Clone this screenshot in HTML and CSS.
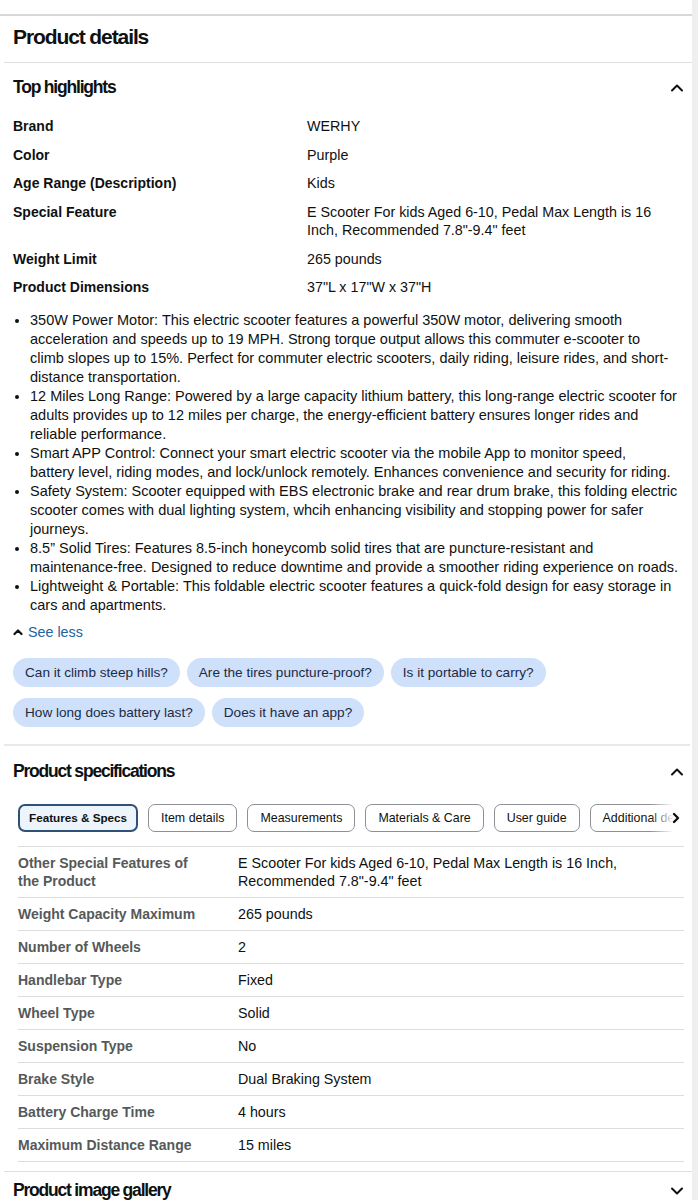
FILE: index.html
```html
<!DOCTYPE html>
<html lang="en">

<head>
    <meta charset="UTF-8">
    <meta name="viewport" content="width=device-width, initial-scale=1.0">
    <title>Product details</title>
    <link rel="stylesheet" href="styles.css">
</head>

<body>
    <div class="page">
        <div class="top-rule"></div>
        <h2 class="pd-title">Product details</h2>
        <div class="rule"></div>

        <!-- top highlights -->
        <div class="sec-head">
            <h3>Top highlights</h3>
            <svg class="chev" width="14" height="9" viewBox="0 0 14 9"><polyline points="2,7.5 7,2.5 12,7.5" /></svg>
        </div>
        <div class="sec-body">
            <table class="hl">
                <tr><td class="k">Brand</td><td>WERHY</td></tr>
                <tr><td class="k">Color</td><td>Purple</td></tr>
                <tr><td class="k">Age Range (Description)</td><td>Kids</td></tr>
                <tr><td class="k">Special Feature</td><td>E Scooter For kids Aged 6-10, Pedal Max Length is 16 Inch, Recommended 7.8"-9.4" feet</td></tr>
                <tr><td class="k">Weight Limit</td><td>265 pounds</td></tr>
                <tr><td class="k">Product Dimensions</td><td>37"L x 17"W x 37"H</td></tr>
            </table>

            <ul class="bullets">
                <li>350W Power Motor: This electric scooter features a powerful 350W motor, delivering smooth acceleration and speeds up to 19 MPH. Strong torque output allows this commuter e-scooter to<br>climb slopes up to 15%. Perfect for commuter electric scooters, daily riding, leisure rides, and short-distance transportation.</li>
                <li>12 Miles Long Range: Powered by a large capacity lithium battery, this long-range electric scooter for adults provides up to 12 miles per charge, the energy-efficient battery ensures longer rides and reliable performance.</li>
                <li>Smart APP Control: Connect your smart electric scooter via the mobile App to monitor speed,<br>battery level, riding modes, and lock/unlock remotely. Enhances convenience and security for riding.</li>
                <li>Safety System: Scooter equipped with EBS electronic brake and rear drum brake, this folding electric scooter comes with dual lighting system, whcih enhancing visibility and stopping power for safer journeys.</li>
                <li>8.5” Solid Tires: Features 8.5-inch honeycomb solid tires that are puncture-resistant and maintenance-free. Designed to reduce downtime and provide a smoother riding experience on roads.</li>
                <li>Lightweight &amp; Portable: This foldable electric scooter features a quick-fold design for easy storage in cars and apartments.</li>
            </ul>

            <a class="see-less" href="#">
                <svg width="10" height="8" viewBox="0 0 10 8"><polyline points="1.5,6 5,2.5 8.5,6" /></svg>
                See less
            </a>

            <div class="chips">
                <span class="chip">Can it climb steep hills?</span>
                <span class="chip">Are the tires puncture-proof?</span>
                <span class="chip">Is it portable to carry?</span>
                <span class="chip">How long does battery last?</span>
                <span class="chip">Does it have an app?</span>
            </div>
        </div>

        <div class="rule thick"></div>

        <!-- specifications -->
        <div class="sec-head spec">
            <h3>Product specifications</h3>
            <svg class="chev" width="14" height="9" viewBox="0 0 14 9"><polyline points="2,7.5 7,2.5 12,7.5" /></svg>
        </div>
        <div class="tabs-wrap">
            <div class="tabs">
                <span class="tab on">Features &amp; Specs</span>
                <span class="tab">Item details</span>
                <span class="tab">Measurements</span>
                <span class="tab">Materials &amp; Care</span>
                <span class="tab">User guide</span>
                <span class="tab">Additional details</span>
            </div>
            <div class="fade">
                <svg width="8" height="12" viewBox="0 0 8 12"><polyline points="2,2 6,6 2,10" /></svg>
            </div>
        </div>

        <table class="specs">
            <tr><td class="k">Other Special Features of the Product</td><td>E Scooter For kids Aged 6-10, Pedal Max Length is 16 Inch, Recommended 7.8"-9.4" feet</td></tr>
            <tr><td class="k">Weight Capacity Maximum</td><td>265 pounds</td></tr>
            <tr><td class="k">Number of Wheels</td><td>2</td></tr>
            <tr><td class="k">Handlebar Type</td><td>Fixed</td></tr>
            <tr><td class="k">Wheel Type</td><td>Solid</td></tr>
            <tr><td class="k">Suspension Type</td><td>No</td></tr>
            <tr><td class="k">Brake Style</td><td>Dual Braking System</td></tr>
            <tr><td class="k">Battery Charge Time</td><td>4 hours</td></tr>
            <tr><td class="k">Maximum Distance Range</td><td>15 miles</td></tr>
        </table>

        <div class="rule"></div>

        <div class="sec-head last">
            <h3>Product image gallery</h3>
            <svg class="chev" width="14" height="9" viewBox="0 0 14 9"><polyline points="2,2.5 7,7.5 12,2.5" /></svg>
        </div>
    </div>
</body>

</html>
```

FILE: styles.css
```css
* {
    margin: 0;
    padding: 0;
    box-sizing: border-box;
}

body {
    background: #efefef;
    font-family: "Liberation Sans", Arial, sans-serif;
    font-size: 14.3px;
    color: #0f1111;
}

.page {
    width: 692px;
    min-height: 1200px;
    background: #fff;
    padding-top: 14px;
}

.top-rule {
    height: 2px;
    background: #d5d9d9;
}

.pd-title {
    height: 46px;
    display: flex;
    align-items: center;
    padding: 0 0 5px 13px;
    font-size: 21px;
    letter-spacing: -1.1px;
}

.rule {
    height: 1px;
    margin-left: 4px;
    background: #dedfe0;
}

.rule.thick {
    height: 2px;
    margin-right: 2px;
    background: #e8e9ea;
}

.sec-head {
    height: 48px;
    display: flex;
    align-items: center;
    justify-content: space-between;
    padding: 0 8px 0 13px;
}

.sec-head.spec {
    padding-top: 4px;
}

.sec-head.last {
    height: 38px;
}

.sec-head h3 {
    font-size: 17.5px;
    letter-spacing: -1.2px;
}

.chev polyline,
.see-less polyline,
.fade polyline {
    fill: none;
    stroke: #0f1111;
    stroke-width: 2;
    stroke-linecap: round;
    stroke-linejoin: round;
}

.sec-body {
    padding: 1px 8px 17px 13px;
}

/* key / value list under top highlights */
.hl {
    border-collapse: collapse;
    width: 100%;
    line-height: 18.5px;
}

.hl td {
    padding: 5px 0;
    vertical-align: top;
}

.hl td.k {
    width: 294px;
    font-size: 14px;
    font-weight: bold;
}

.bullets {
    margin-top: 9px;
    padding-left: 17px;
    font-size: 14.5px;
    line-height: 19px;
}

.see-less {
    display: flex;
    align-items: center;
    gap: 5px;
    margin-top: 8px;
    line-height: 18px;
    color: #2162a1;
    text-decoration: none;
}

.see-less polyline {
    stroke-width: 2.2;
}

.chips {
    display: flex;
    flex-wrap: wrap;
    gap: 11px 7px;
    margin-top: 17px;
}

.chip {
    height: 29px;
    line-height: 29px;
    padding: 0 12px;
    border-radius: 15px;
    background: #cfe0fb;
    color: #1b2b44;
    font-size: 13.6px;
}

/* spec tabs */
.tabs-wrap {
    position: relative;
    margin: 10px 8px 0 18px;
    overflow: hidden;
}

.tabs {
    display: flex;
    gap: 10px;
    white-space: nowrap;
}

.tab {
    height: 28px;
    line-height: 26px;
    padding: 0 12px;
    border: 1px solid #8d9096;
    border-radius: 7px;
    font-size: 12.4px;
}

.tab.on {
    padding: 0 9px;
    border: 2px solid #2e5277;
    line-height: 24px;
    background: #edf4fc;
    font-size: 11.7px;
    font-weight: bold;
}

.fade {
    position: absolute;
    top: 0;
    right: 0;
    width: 34px;
    height: 28px;
    display: flex;
    align-items: center;
    justify-content: flex-end;
    padding-right: 4px;
    background: linear-gradient(to right, rgba(255, 255, 255, 0), #fff 70%);
}

.fade polyline {
    stroke-width: 2.4;
}

.specs {
    width: 666px;
    margin: 14px 0 9px 18px;
    border-collapse: collapse;
    border-top: 1px solid #dcdddd;
    line-height: 18px;
}

.specs td {
    padding: 7px 0;
    border-bottom: 1px solid #dcdddd;
    vertical-align: top;
}

.specs td.k {
    width: 220px;
    padding-right: 30px;
    font-size: 14px;
    font-weight: bold;
    color: #565959;
}
```
